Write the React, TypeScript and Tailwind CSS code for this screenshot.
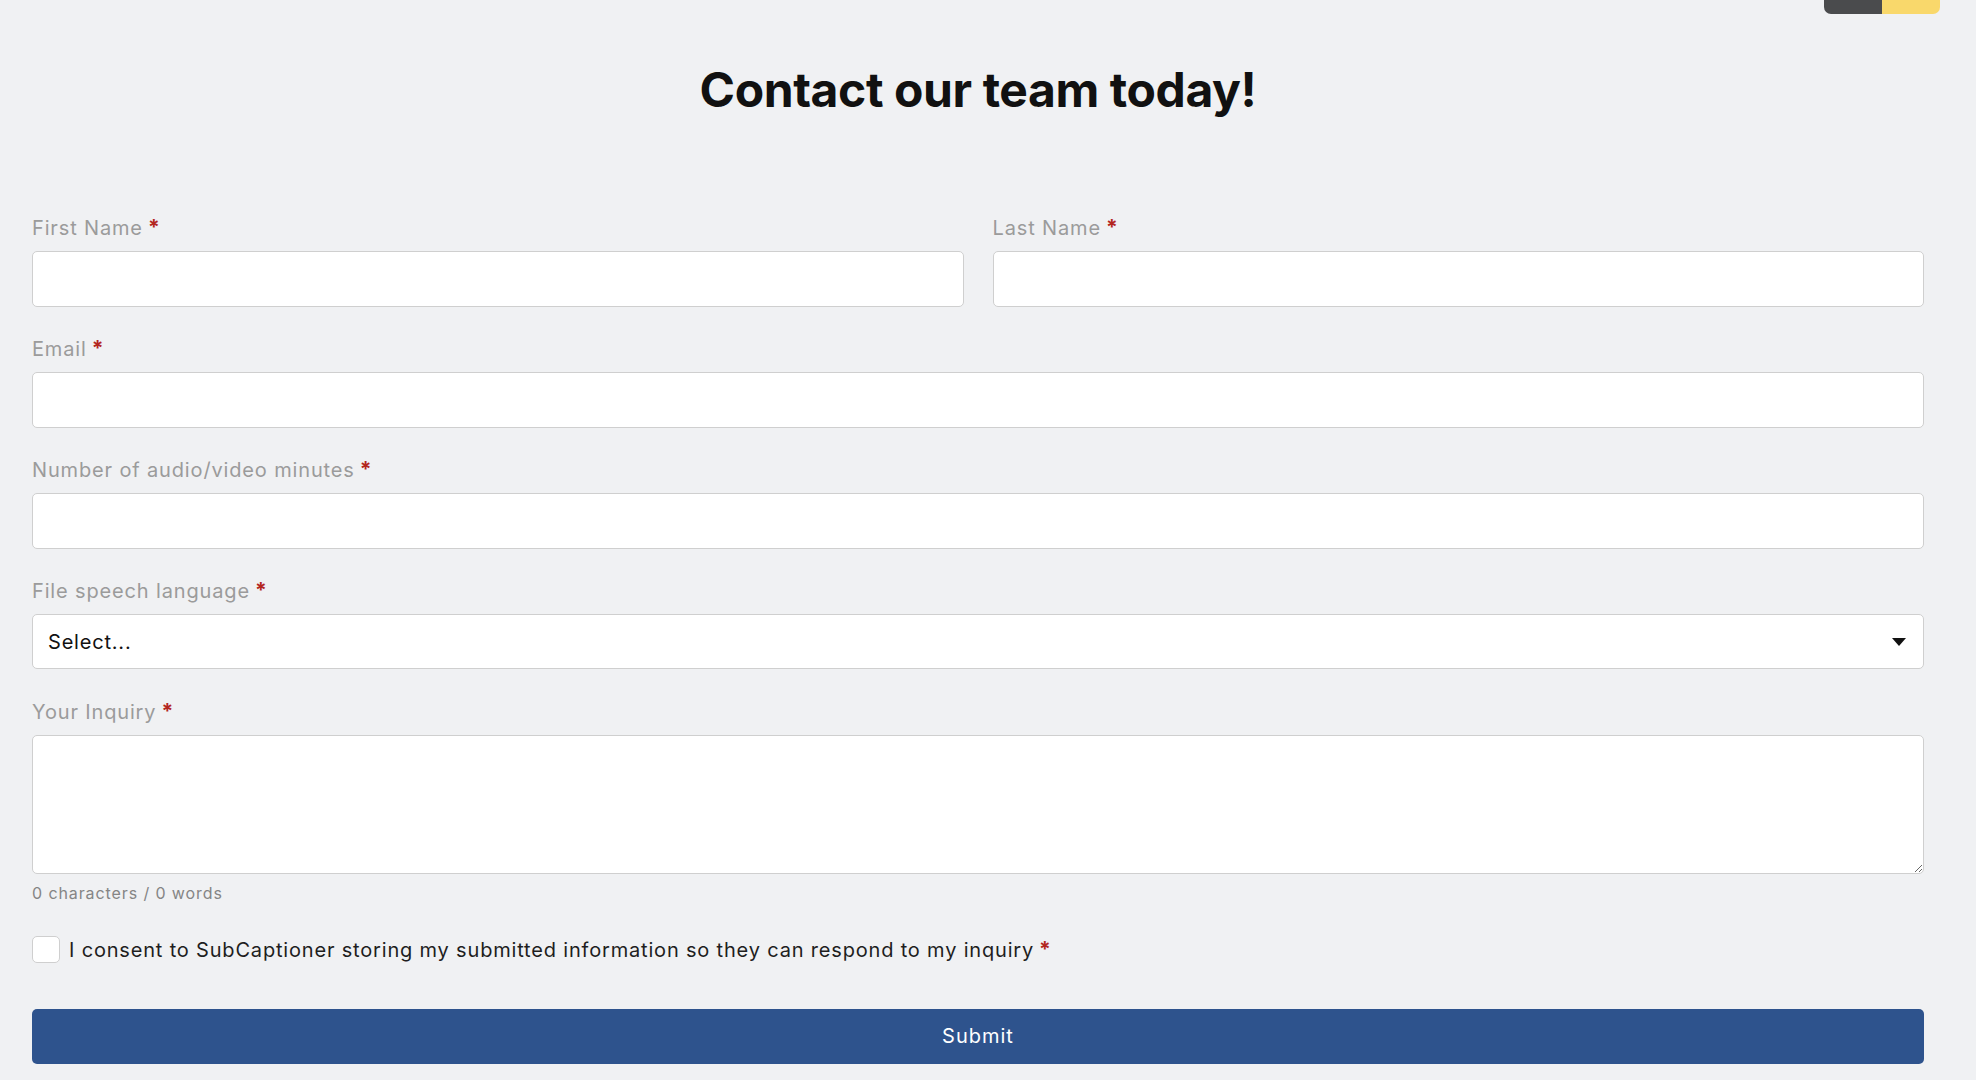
import React from "react";

const font = { fontFamily: "Inter, 'Open Sans', sans-serif" };

function Label({ text }: { text: string }) {
  return (
    <div className="h-[24px] flex items-center text-[20px] leading-[24px] text-[#9b9b9b] tracking-[0.85px]">
      <span>{text}</span>
      <span className="ml-[5px] text-[#b3261e] font-bold text-[21px]">*</span>
    </div>
  );
}

function Field({ text, className = "" }: { text: string; className?: string }) {
  return (
    <div className={"flex flex-col " + className}>
      <Label text={text} />
      <input className="mt-[11px] h-[56px] w-full bg-white border border-[#cfcfcf] rounded-[5px] outline-none px-3" />
    </div>
  );
}

export default function App() {
  return (
    <div className="min-h-screen w-full bg-[#f0f1f3] relative" style={font}>
      <div className="absolute top-0 left-[1824px] flex h-[14px] w-[116px] rounded-b-[7px] overflow-hidden">
        <div className="w-[58px] bg-[#4a4b4d]" />
        <div className="w-[58px] bg-[#f9d86b]" />
      </div>
      <div className="ml-[32px] w-[1892px] pt-[61px] flex justify-center">
        <h1 className="text-[48px] leading-[58px] font-bold text-[#111] tracking-[-0.4px]">Contact our team today!</h1>
      </div>
      <form className="ml-[32px] w-[1892px] mt-[97px] flex flex-col">
        <div className="flex gap-[29px]">
          <Field text="First Name" className="flex-1" />
          <Field text="Last Name" className="flex-1" />
        </div>
        <Field text="Email" className="mt-[30px]" />
        <Field text="Number of audio/video minutes" className="mt-[30px]" />
        <div className="flex flex-col mt-[30px]">
          <Label text="File speech language" />
          <div className="mt-[11px] h-[55px] w-full bg-white border border-[#cfcfcf] rounded-[5px] flex items-center justify-between pl-[15px] pr-[17px]">
            <span className="text-[20px] text-[#111] tracking-[0.8px]">Select...</span>
            <svg width="14" height="8" viewBox="0 0 14 8"><path d="M0 0h14L7 8z" fill="#111" /></svg>
          </div>
        </div>
        <div className="flex flex-col mt-[31px]">
          <Label text="Your Inquiry" />
          <textarea className="mt-[11px] h-[139px] w-full bg-white border border-[#cfcfcf] rounded-[5px] outline-none p-3 resize-y" />
          <div className="mt-[9px] text-[16px] leading-[20px] text-[#858585] tracking-[0.9px]">0 characters / 0 words</div>
        </div>
        <div className="mt-[31px] flex items-center">
          <div className="w-[28px] h-[27px] bg-white border border-[#cfcfcf] rounded-[5px]" />
          <span className="ml-[9px] text-[20px] text-[#1e1e1e] tracking-[0.82px]">I consent to SubCaptioner storing my submitted information so they can respond to my inquiry</span>
          <span className="ml-[5px] text-[21px] text-[#b3261e] font-bold">*</span>
        </div>
        <button type="button" className="mt-[43px] h-[55px] w-full bg-[#2e538d] rounded-[5px] text-white text-[20px] tracking-[1px]">Submit</button>
      </form>
    </div>
  );
}
